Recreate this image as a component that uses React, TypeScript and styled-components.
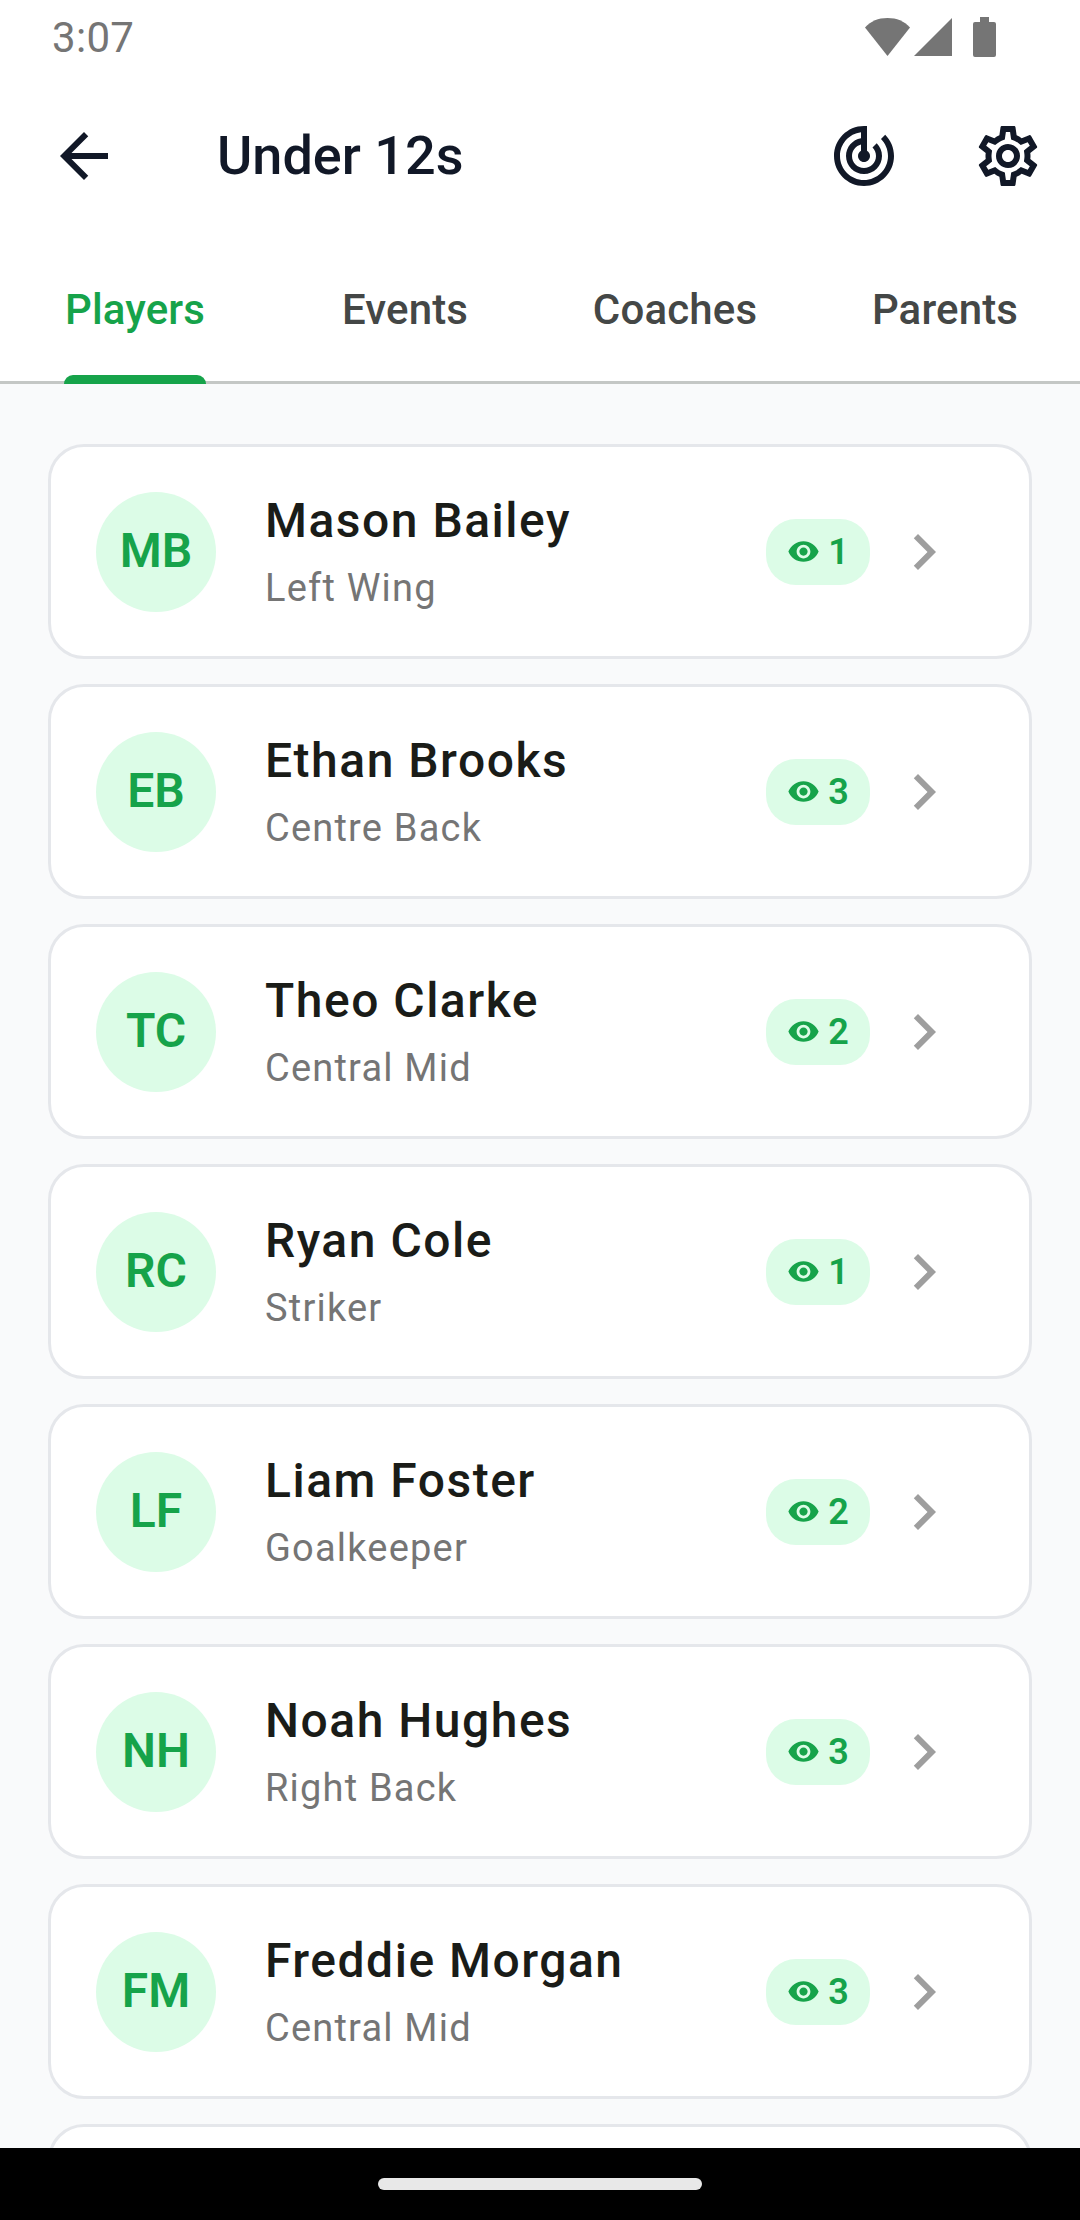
import React from "react";
import styled, { createGlobalStyle } from "styled-components";

const Global = createGlobalStyle`
  html, body { margin: 0; padding: 0; background: #fff; }
  * { box-sizing: border-box; }
`;

const Screen = styled.div`
  width: 1080px;
  height: 2220px;
  display: flex;
  flex-direction: column;
  overflow: hidden;
  font-family: Roboto, sans-serif;
  background: #fff;
`;

const StatusBar = styled.div`
  height: 75px;
  flex: none;
  display: flex;
  align-items: center;
  justify-content: space-between;
  padding: 0 84px 0 52px;
  color: #757575;
`;

const Clock = styled.span`
  font-size: 42px;
  line-height: 75px;
  letter-spacing: 0.3px;
`;

const StatusIcons = styled.div`
  display: flex;
  align-items: center;
  height: 40px;
  margin-top: -2px;
`;

const Header = styled.div`
  height: 161px;
  flex: none;
  display: flex;
  align-items: center;
  padding: 0 36px 0 48px;
`;

const IconSlot = styled.div`
  width: 72px;
  height: 72px;
  flex: none;
  color: #111827;
  svg { display: block; }
`;

const Title = styled.h1`
  flex: 1;
  margin: 0 0 0 97px;
  font-size: 54px;
  font-weight: 500;
  line-height: 72px;
  color: #111827;
`;

const HeaderActions = styled.div`
  display: flex;
  gap: 72px;
`;

const Tabs = styled.div`
  height: 148px;
  flex: none;
  display: grid;
  grid-template-columns: repeat(4, 270px);
  border-bottom: 3px solid #c4c7c5;
`;

const Tab = styled.div<{ $active?: boolean }>`
  position: relative;
  display: flex;
  align-items: center;
  justify-content: center;
  height: 148px;
  padding-bottom: 2px;
  font-size: 42px;
  font-weight: 500;
  letter-spacing: 0.15px;
  color: ${(p) => (p.$active ? "#16a34a" : "#444746")};
`;

const TabIndicator = styled.span`
  position: absolute;
  left: 64px;
  width: 142px;
  bottom: 0;
  height: 9px;
  background: #16a34a;
  border-radius: 9px 9px 0 0;
`;

const List = styled.div`
  flex: 1;
  min-height: 0;
  overflow: hidden;
  display: flex;
  flex-direction: column;
  gap: 25px;
  padding: 60px 48px 0;
  background: #f9fafb;
`;

const Card = styled.div`
  flex: none;
  height: 215px;
  display: flex;
  align-items: center;
  padding: 0 69px 0 45px;
  background: #fff;
  border: 3px solid #e5e7eb;
  border-radius: 36px;
`;

const Avatar = styled.div`
  width: 120px;
  height: 120px;
  flex: none;
  display: flex;
  align-items: center;
  justify-content: center;
  padding-bottom: 2px;
  border-radius: 50%;
  background: #dcfce7;
  color: #16a34a;
  font-size: 48px;
  font-weight: 600;
`;

const Info = styled.div`
  flex: 1;
  margin-left: 49px;
  display: flex;
  flex-direction: column;
`;

const Name = styled.div`
  font-size: 48px;
  font-weight: 500;
  line-height: 62px;
  letter-spacing: 1.5px;
  color: #1a1c18;
`;

const Role = styled.div`
  margin-top: 11px;
  font-size: 38px;
  line-height: 50px;
  letter-spacing: 1.2px;
  color: #757575;
`;

const Badge = styled.div`
  width: 104px;
  height: 66px;
  flex: none;
  display: flex;
  align-items: center;
  justify-content: center;
  gap: 8px;
  border-radius: 30px;
  background: #dcfce7;
  color: #16a34a;
  font-size: 36px;
  font-weight: 600;
  svg { display: block; }
`;

const Chevron = styled.div`
  width: 72px;
  height: 72px;
  flex: none;
  margin-left: 18px;
  color: #9e9e9e;
  svg { display: block; }
`;

const NavBar = styled.div`
  height: 72px;
  flex: none;
  display: flex;
  justify-content: center;
  align-items: flex-start;
  padding-top: 30px;
  background: #000;
`;

const NavPill = styled.div`
  width: 324px;
  height: 12px;
  border-radius: 6px;
  background: #e8e8e8;
`;

const Ico = ({ d, size = 72 }: { d: string; size?: number }) => (
  <svg width={size} height={size} viewBox="0 0 24 24" fill="currentColor">
    <path d={d} />
  </svg>
);

const BACK = "M20 11H7.83l5.59-5.59L12 4l-8 8 8 8 1.41-1.41L7.83 13H20v-2z";
const RADAR =
  "M19.07 4.93l-1.41 1.41C19.1 7.79 20 9.79 20 12c0 4.42-3.58 8-8 8s-8-3.58-8-8c0-4.08 3.05-7.44 7-7.93v2.02C8.16 6.57 6 9.03 6 12c0 3.31 2.69 6 6 6s6-2.69 6-6c0-1.66-.67-3.16-1.76-4.24l-1.41 1.41C15.55 9.9 16 10.9 16 12c0 2.21-1.79 4-4 4s-4-1.79-4-4c0-1.86 1.28-3.41 3-3.86v2.14c-.6.35-1 .98-1 1.72 0 1.1.9 2 2 2s2-.9 2-2c0-.74-.4-1.38-1-1.72V2h-1C6.48 2 2 6.48 2 12s4.48 10 10 10 10-4.48 10-10c0-2.76-1.12-5.26-2.93-7.07z";
const GEAR =
  "M19.43 12.98c.04-.32.07-.64.07-.98 0-.34-.03-.66-.07-.98l2.11-1.65c.19-.15.24-.42.12-.64l-2-3.46c-.09-.16-.26-.25-.44-.25-.06 0-.12.01-.17.03l-2.49 1c-.52-.4-1.08-.73-1.69-.98l-.38-2.65C14.46 2.18 14.25 2 14 2h-4c-.25 0-.46.18-.49.42l-.38 2.65c-.61.25-1.17.59-1.69.98l-2.49-1c-.06-.02-.12-.03-.18-.03-.17 0-.34.09-.43.25l-2 3.46c-.13.22-.07.49.12.64l2.11 1.65c-.04.32-.07.65-.07.98 0 .33.03.66.07.98l-2.11 1.65c-.19.15-.24.42-.12.64l2 3.46c.09.16.26.25.44.25.06 0 .12-.01.17-.03l2.49-1c.52.4 1.08.73 1.69.98l.38 2.65c.03.24.24.42.49.42h4c.25 0 .46-.18.49-.42l.38-2.65c.61-.25 1.17-.59 1.69-.98l2.49 1c.06.02.12.03.18.03.17 0 .34-.09.43-.25l2-3.46c.12-.22.07-.49-.12-.64l-2.11-1.65zm-1.98-1.71c.04.31.05.52.05.73 0 .21-.02.43-.05.73l-.14 1.13.89.7 1.08.84-.7 1.21-1.27-.51-1.04-.42-.9.68c-.43.32-.84.56-1.25.73l-1.06.43-.16 1.13-.2 1.35h-1.4l-.19-1.35-.16-1.13-1.06-.43c-.43-.18-.83-.41-1.23-.71l-.91-.7-1.06.43-1.27.51-.7-1.21 1.08-.84.89-.7-.14-1.13c-.03-.31-.05-.54-.05-.74s.02-.43.05-.73l.14-1.13-.89-.7-1.08-.84.7-1.21 1.27.51 1.04.42.9-.68c.43-.32.84-.56 1.25-.73l1.06-.43.16-1.13.2-1.35h1.39l.19 1.35.16 1.13 1.06.43c.43.18.83.41 1.23.71l.91.7 1.06-.43 1.27-.51.7 1.21-1.07.85-.89.7.14 1.13zM12 8c-2.21 0-4 1.79-4 4s1.79 4 4 4 4-1.79 4-4-1.79-4-4-4zm0 6c-1.1 0-2-.9-2-2s.9-2 2-2 2 .9 2 2-.9 2-2 2z";
const EYE =
  "M12 4.5C7 4.5 2.73 7.61 1 12c1.73 4.39 6 7.5 11 7.5s9.27-3.11 11-7.5c-1.73-4.39-6-7.5-11-7.5zM12 17c-2.76 0-5-2.24-5-5s2.24-5 5-5 5 2.24 5 5-2.24 5-5 5zm0-8c-1.66 0-3 1.34-3 3s1.34 3 3 3 3-1.34 3-3-1.34-3-3-3z";
const CHEVRON = "M10 6L8.59 7.41 13.17 12l-4.58 4.59L10 18l6-6z";

const players = [
  { i: "MB", n: "Mason Bailey", r: "Left Wing", c: 1 },
  { i: "EB", n: "Ethan Brooks", r: "Centre Back", c: 3 },
  { i: "TC", n: "Theo Clarke", r: "Central Mid", c: 2 },
  { i: "RC", n: "Ryan Cole", r: "Striker", c: 1 },
  { i: "LF", n: "Liam Foster", r: "Goalkeeper", c: 2 },
  { i: "NH", n: "Noah Hughes", r: "Right Back", c: 3 },
  { i: "FM", n: "Freddie Morgan", r: "Central Mid", c: 3 },
];

export default function App() {
  return (
    <Screen>
      <Global />
      <StatusBar>
        <Clock>3:07</Clock>
        <StatusIcons>
          <svg width="132" height="40" viewBox="0 0 132 40" fill="currentColor">
            <path d="M1 10.5C7 4 14 1 23.5 1S40 4 46 10.5L23.5 39z" />
            <path d="M50 39L88 1v38z" />
            <path d="M116 0h9v5h5a2 2 0 0 1 2 2v31a2 2 0 0 1-2 2h-19a2 2 0 0 1-2-2V7a2 2 0 0 1 2-2h5z" />
          </svg>
        </StatusIcons>
      </StatusBar>
      <Header>
        <IconSlot><Ico d={BACK} /></IconSlot>
        <Title>Under 12s</Title>
        <HeaderActions>
          <IconSlot><Ico d={RADAR} /></IconSlot>
          <IconSlot><Ico d={GEAR} /></IconSlot>
        </HeaderActions>
      </Header>
      <Tabs>
        <Tab $active>Players<TabIndicator /></Tab>
        <Tab>Events</Tab>
        <Tab>Coaches</Tab>
        <Tab>Parents</Tab>
      </Tabs>
      <List>
        {players.map((p) => (
          <Card key={p.i}>
            <Avatar>{p.i}</Avatar>
            <Info>
              <Name>{p.n}</Name>
              <Role>{p.r}</Role>
            </Info>
            <Badge>
              <Ico d={EYE} size={33} />
              {p.c}
            </Badge>
            <Chevron><Ico d={CHEVRON} /></Chevron>
          </Card>
        ))}
        <Card />
      </List>
      <NavBar><NavPill /></NavBar>
    </Screen>
  );
}
